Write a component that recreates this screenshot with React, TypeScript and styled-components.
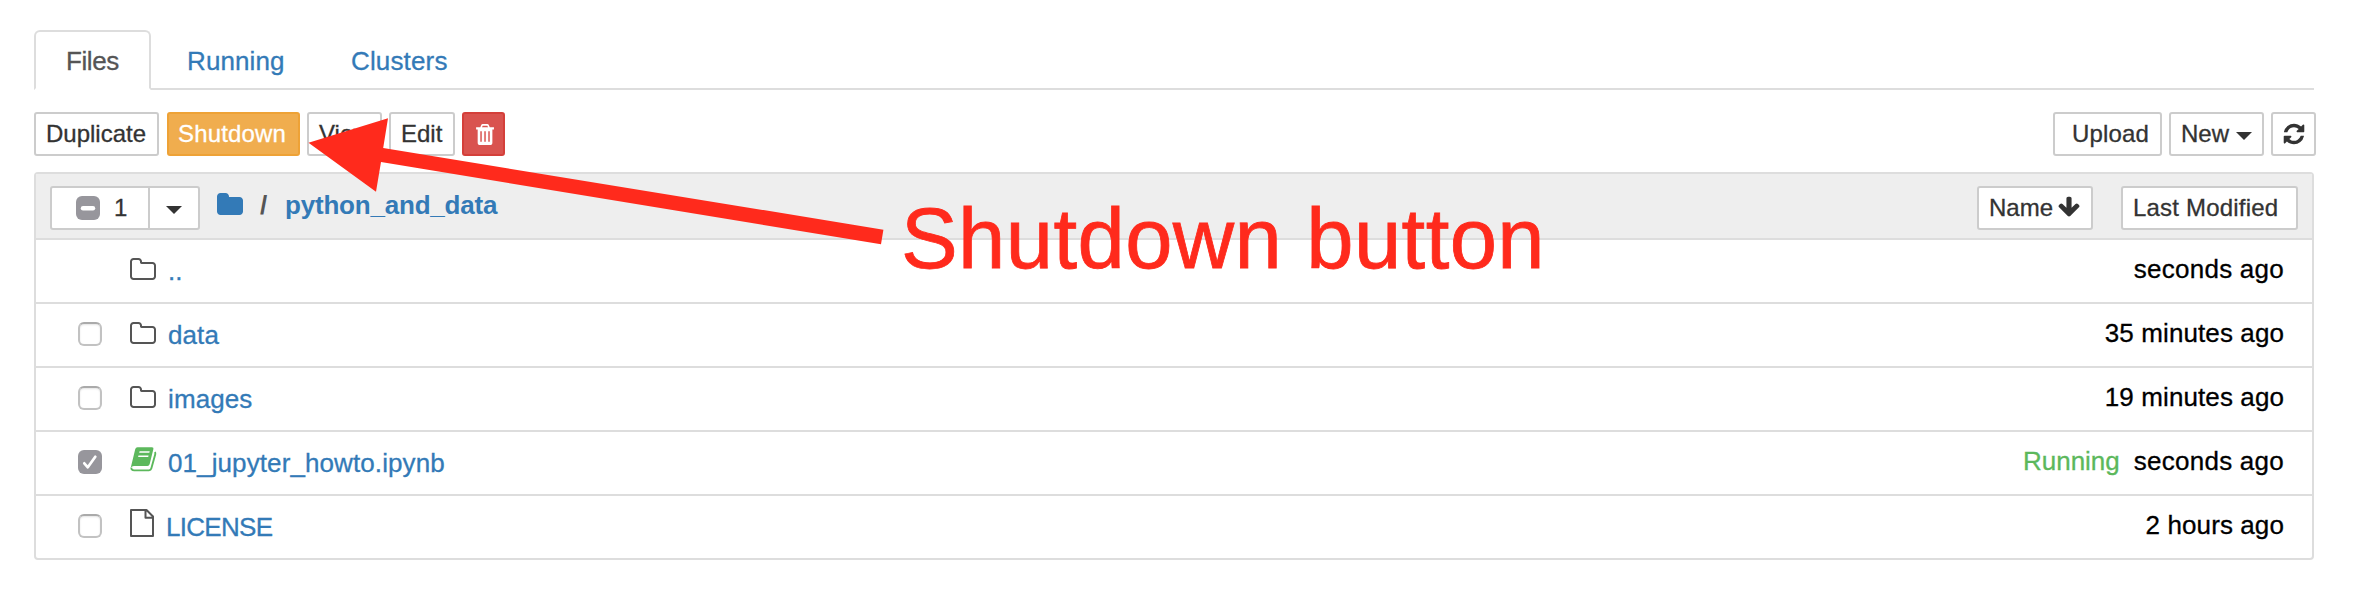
import React from 'react';
import styled, { createGlobalStyle, css } from 'styled-components';

const Global = createGlobalStyle`
  *, *::before, *::after { box-sizing: border-box; }
  body { margin: 0; background: #fff; }
`;

const Page = styled.div`
  position: relative;
  width: 2362px;
  height: 604px;
  padding: 30px 46px 0 34px;
  overflow: hidden;
  font: 26px/36px "Liberation Sans", Arial, sans-serif;
  -webkit-text-stroke: 0.3px currentColor;
  color: #000;
`;

const Tabs = styled.nav`
  display: flex;
  width: 2280px;
  height: 60px;
  border-bottom: 2px solid #ddd;
`;

const Tab = styled.a<{ $active?: boolean; $width: number; $track: number }>`
  width: ${p => p.$width}px;
  height: ${p => (p.$active ? 60 : 58)}px;
  margin-right: 4px;
  padding: 11px 0 0 30px;
  border: 2px solid transparent;
  border-radius: 6px 6px 0 0;
  color: #337ab7;
  letter-spacing: ${p => p.$track}px;
  white-space: nowrap;
  ${p => p.$active && css`
    color: #555;
    background: #fff;
    border-color: #ddd;
    border-bottom-color: #fff;
  `}
`;

const Toolbar = styled.div`
  display: flex;
  justify-content: space-between;
  width: 2282px;
  margin-top: 22px;
`;

const Group = styled.div<{ $gap?: number }>`
  display: flex;
  gap: ${p => p.$gap ?? 7}px;
`;

const tones = {
  plain: ['#fff', '#ccc', '#333'],
  warning: ['#f0ad4e', '#eea236', '#fff'],
  danger: ['#d9534f', '#d43f3a', '#fff'],
};

const Button = styled.button<{ $w: number; $tone?: keyof typeof tones; $left?: number; $track?: number; $after?: number }>`
  display: flex;
  align-items: center;
  width: ${p => p.$w}px;
  height: 44px;
  margin: 0 ${p => p.$after ?? 0}px 0 0;
  padding: 0 0 0 ${p => p.$left ?? 10}px;
  border: 2px solid ${p => tones[p.$tone ?? 'plain'][1]};
  border-radius: 3px;
  background: ${p => tones[p.$tone ?? 'plain'][0]};
  color: ${p => tones[p.$tone ?? 'plain'][2]};
  font: 24px/36px "Liberation Sans", Arial, sans-serif;
  letter-spacing: ${p => p.$track ?? 0}px;
  white-space: nowrap;
`;

const Caret = styled.span<{ $left: number; $top?: number }>`
  height: 8px;
  margin: ${p => p.$top ?? 4}px 0 0 ${p => p.$left}px;
  border: 8px solid transparent;
  border-top-color: #333;
  border-bottom: 0;
`;

const Glyph = styled.svg<{ $size: number; $left?: number; $top?: number }>`
  display: block;
  flex: none;
  width: ${p => p.$size}px;
  height: ${p => p.$size}px;
  margin: ${p => p.$top ?? 0}px 0 0 ${p => p.$left ?? 0}px;
  fill: currentColor;
`;

const List = styled.section`
  width: 2280px;
  margin-top: 16px;
  border: 2px solid #ddd;
  border-radius: 4px;
`;

const Header = styled.header`
  display: flex;
  justify-content: space-between;
  height: 64px;
  padding: 12px 14px 0 14px;
  background: #eee;
`;

const Split = styled.div`
  display: flex;
  width: 150px;
  height: 44px;
  border: 2px solid #ccc;
  border-radius: 3px;
  background: #fff;
`;

const SelectCount = styled.div`
  display: flex;
  align-items: center;
  gap: 14px;
  width: 98px;
  padding-left: 24px;
  border-right: 2px solid #ccc;
  color: #333;
  font-size: 24px;
`;

const Crumbs = styled.div`
  display: flex;
  height: 36px;
  margin: 1px 0 0 16px;
  color: #337ab7;
  font-weight: bold;
  -webkit-text-stroke: 0;
`;

const Slash = styled.span`
  width: 25px;
  margin-left: 16px;
  color: #555;
`;

const Crumb = styled.span`
  letter-spacing: -0.2px;
`;

const Row = styled.div`
  display: flex;
  height: 64px;
  padding: 0 28px 0 42px;
  border-top: 2px solid #ddd;
`;

const CheckCell = styled.div`
  width: 52px;
  padding-top: 18px;
`;

const Box = styled.span<{ $on?: boolean }>`
  display: block;
  flex: none;
  width: 24px;
  height: 24px;
  border: 2px solid #c2c2c2;
  border-top-color: #aaa;
  border-radius: 6px;
  background: #fff;
  box-shadow: inset 0 1px 2px #e4e4e4;
  ${p => p.$on && css`
    border: 0;
    background: #97969c;
    box-shadow: none;
  `}
  svg { display: block; }
`;

const IconCell = styled.div<{ $w: number; $color?: string }>`
  width: ${p => p.$w}px;
  padding-top: 15px;
  margin-left: -2px;
  color: ${p => p.$color ?? '#555'};
`;

const Link = styled.a<{ $track?: number }>`
  flex: 1;
  padding: 13px 0 0 2px;
  color: #337ab7;
  letter-spacing: ${p => p.$track ?? 0.1}px;
`;

const Running = styled.span`
  padding-top: 11px;
  margin-right: 14px;
  color: #5cb85c;
`;

const When = styled.time<{ $track: number }>`
  padding-top: 11px;
  letter-spacing: ${p => p.$track}px;
`;

const Arrow = styled.svg`
  position: absolute;
  left: 0;
  top: 0;
  width: 900px;
  height: 300px;
  fill: #ff2a1c;
`;

const Callout = styled.div`
  position: absolute;
  left: 901px;
  top: 190px;
  color: #ff2a1c;
  font-size: 85px;
  line-height: 98px;
  letter-spacing: 0.4px;
  -webkit-text-stroke: 0.8px currentColor;
  white-space: nowrap;
`;

const icons = {
  folderO: 'M1600 1312v-704q0-40-28-68t-68-28h-704q-40 0-68-28t-28-68v-64q0-40-28-68t-68-28h-320q-40 0-68 28t-28 68v960q0 40 28 68t68 28h1216q40 0 68-28t28-68zm128-704v704q0 92-66 158t-158 66h-1216q-92 0-158-66t-66-158v-960q0-92 66-158t158-66h320q92 0 158 66t66 158v32h672q92 0 158 66t66 158z',
  folder: 'M1728 608v704q0 92-66 158t-158 66h-1216q-92 0-158-66t-66-158v-960q0-92 66-158t158-66h320q92 0 158 66t66 158v32h672q92 0 158 66t66 158z',
  refresh: 'M1639 1056q0 5-1 7-64 268-268 434.5t-478 166.5q-146 0-282.5-55t-243.5-157l-129 129q-19 19-45 19t-45-19-19-45v-448q0-26 19-45t45-19h448q26 0 45 19t19 45-19 45l-137 137q71 66 161 102t187 36q134 0 250-65t186-179q11-17 53-117 8-23 30-23h192q13 0 22.5 9.5t9.5 22.5zm25-800v448q0 26-19 45t-45 19h-448q-26 0-45-19t-19-45 19-45l138-138q-148-137-349-137-134 0-250 65t-186 179q-11 17-53 117-8 23-30 23h-199q-13 0-22.5-9.5t-9.5-22.5v-7q65-268 270-434.5t480-166.5q146 0 284 55.5t245 156.5l130-129q19-19 45-19t45 19 19 45z',
  down: 'M1675 832q0 53-37 90l-651 652q-39 37-91 37-53 0-90-37l-651-652q-38-36-38-90 0-53 38-91l74-75q39-37 91-37 53 0 90 37l294 294v-704q0-52 38-90t90-38h128q52 0 90 38t38 90v704l294-294q37-37 90-37 52 0 91 37l75 75q37 39 37 91z',
};

function Icon({ name, size, left, top }: { name: keyof typeof icons; size: number; left?: number; top?: number }) {
  return (
    <Glyph viewBox="0 0 1792 1792" $size={size} $left={left} $top={top}>
      <path d={icons[name]} />
    </Glyph>
  );
}

function Trash() {
  return (
    <Glyph viewBox="3 2 18 20" $size={21} $left={-0.5}>
      <path fillRule="evenodd" d="M4 5.2H8L9 2.8Q9.4 2 10.3 2H14.7Q15.6 2 16 2.8L17 5.2H21V7.2H19.5V19.5Q19.5 22 17.2 22H7.8Q5.5 22 5.5 19.5V7.2H4ZM9.6 5.2H15.4L14.7 3.6H10.3ZM8 9V18.8H9.4V9ZM11.8 9V18.8H13.2V9ZM15.6 9V18.8H17V9Z" />
    </Glyph>
  );
}

function Book() {
  return (
    <Glyph viewBox="0 0 28 28" $size={28} $left={2}>
      <path fillRule="evenodd" d="M7.5 .2H22Q23.9 .2 23.4 2.1L19.7 17Q19.2 18.9 17.4 18.9H3.8Q2.2 18.9 .8 20.4L5.2 2.2Q5.7 .2 7.5 .2ZM9.6 4.3L9.2 5.8H19.3L19.7 4.3ZM8.5 8.4L8.1 9.9H18.2L18.6 8.4Z" />
      <path d="M1.4 20.6Q1.1 23.4 4.2 23.4H19Q20.8 23.4 21.3 21.6L25.2 7.4Q25.6 6 24.9 5" fill="none" stroke="currentColor" strokeWidth="1.9" />
    </Glyph>
  );
}

function FileO() {
  return (
    <Glyph viewBox="0 0 28 28" $size={28} $left={2} $top={-2}>
      <path d="M1 1H16.5L23 7.5V27H1ZM15.5 1V8.7H23" fill="none" stroke="currentColor" strokeWidth="2" strokeLinejoin="round" />
    </Glyph>
  );
}

function Check({ state }: { state?: 'on' | 'mixed' }) {
  return (
    <Box $on={!!state}>
      {state && (
        <svg width="24" height="24" viewBox="0 0 24 24" fill="none" stroke="#fff" strokeLinecap="round" strokeLinejoin="round">
          {state === 'on' ? <path d="M6.3 13.3L9.8 17.3L17.3 6.8" strokeWidth="2.7" /> : <path d="M7 12.3H17" strokeWidth="4.4" />}
        </svg>
      )}
    </Box>
  );
}

type Entry = { name: string; icon: 'folder' | 'book' | 'file'; when: string; up?: boolean; checked?: boolean; running?: boolean; track?: number };

const entries: Entry[] = [
  { name: '..', icon: 'folder', when: 'seconds ago', up: true },
  { name: 'data', icon: 'folder', when: '35 minutes ago' },
  { name: 'images', icon: 'folder', when: '19 minutes ago' },
  { name: '01_jupyter_howto.ipynb', icon: 'book', when: 'seconds ago', checked: true, running: true },
  { name: 'LICENSE', icon: 'file', when: '2 hours ago', track: -0.7 },
];

export default function App() {
  return (
    <Page>
      <Global />
      <Tabs>
        <Tab $active $width={117} $track={-0.4}>Files</Tab>
        <Tab $width={160} $track={0.1}>Running</Tab>
        <Tab $width={160} $track={0.15}>Clusters</Tab>
      </Tabs>
      <Toolbar>
        <Group>
          <Button $w={125} $after={1}>Duplicate</Button>
          <Button $w={133} $tone="warning" $left={9} $track={0.15}>Shutdown</Button>
          <Button $w={75}>View</Button>
          <Button $w={66}>Edit</Button>
          <Button $w={43} $tone="danger"><Trash /></Button>
        </Group>
        <Group>
          <Button $w={109} $left={17} $track={0.15}>Upload</Button>
          <Button $w={95}>New<Caret $left={7} /></Button>
          <Button $w={45}><Icon name="refresh" size={24} left={-1} /></Button>
        </Group>
      </Toolbar>
      <List>
        <Header>
          <Group $gap={0}>
            <Split>
              <SelectCount><Check state="mixed" />1</SelectCount>
              <Caret $left={16} $top={18} />
            </Split>
            <Crumbs>
              <Icon name="folder" size={28} top={4} />
              <Slash>/</Slash>
              <Crumb>python_and_data</Crumb>
            </Crumbs>
          </Group>
          <Group $gap={28}>
            <Button $w={116}>Name<Icon name="down" size={24} left={4} top={-2} /></Button>
            <Button $w={177} $track={0.2}>Last Modified</Button>
          </Group>
        </Header>
        {entries.map(e => (
          <Row key={e.name}>
            <CheckCell>{!e.up && <Check state={e.checked ? 'on' : undefined} />}</CheckCell>
            <IconCell $w={e.icon === 'file' ? 36 : 38} $color={e.running ? '#5cb85c' : undefined}>
              {e.icon === 'folder' && <Icon name="folderO" size={28} left={1} top={1} />}
              {e.icon === 'book' && <Book />}
              {e.icon === 'file' && <FileO />}
            </IconCell>
            <Link $track={e.track}>{e.name}</Link>
            {e.running && <Running>Running</Running>}
            <When $track={e.when === 'seconds ago' ? 0.25 : 0.1}>{e.when}</When>
          </Row>
        ))}
      </List>
      <Arrow viewBox="0 0 900 300">
        <path d="M308.5 142.7L388 118.3L383.2 148L883.4 229.7L881 244.3L381 162L376 191.7Z" />
      </Arrow>
      <Callout>Shutdown button</Callout>
    </Page>
  );
}
